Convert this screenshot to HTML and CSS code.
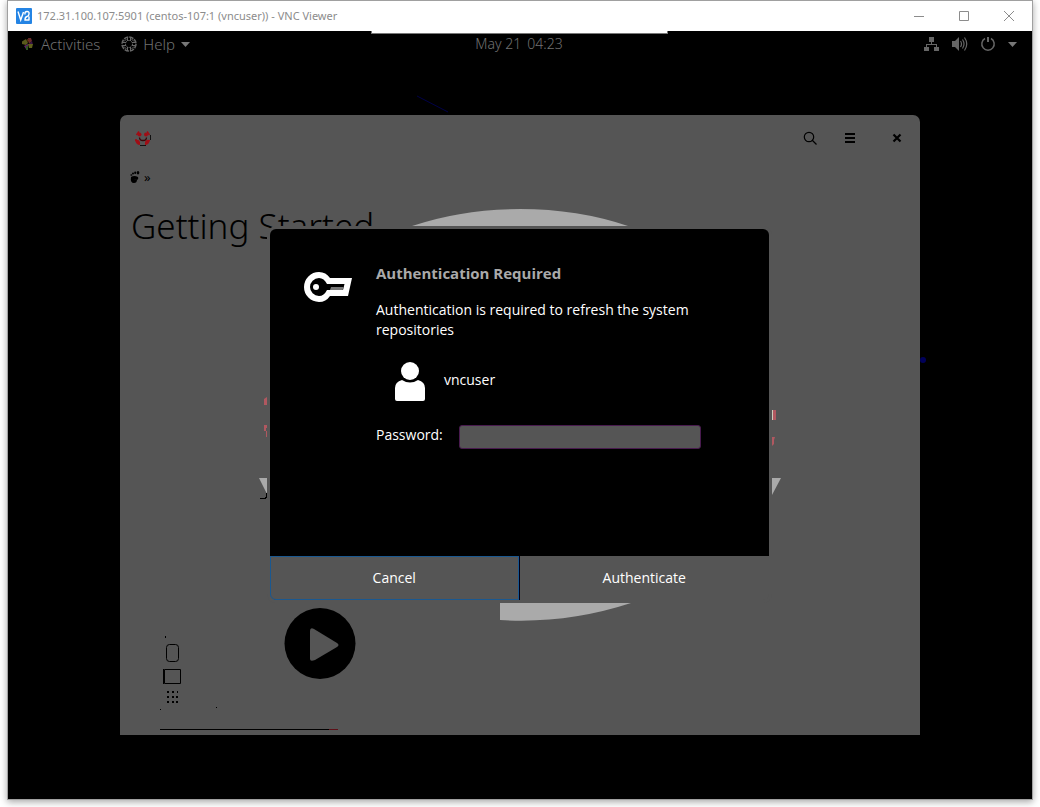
FILE: index.html
```html
<!DOCTYPE html>
<html lang="en">
<head>
<meta charset="utf-8">
<title>172.31.100.107:5901 (centos-107:1 (vncuser)) - VNC Viewer</title>
<link rel="stylesheet" href="styles.css">
</head>
<body>
<div class="viewer">
  <header class="titlebar">
    <svg class="app-logo" width="16" height="16" viewBox="0 0 16 16" aria-hidden="true">
      <rect width="16" height="16" rx="1" fill="#2484e4"/>
      <path d="M2 3.500 4.700 12 7.500 4M9 6.500q-.5-3 2-3t2 2.500q0 2-2 2.500-2 .5-2 3.500h4.500M13 8.500V12" fill="none" stroke="#fff" stroke-width="1.400"/>
    </svg>
    <h1 class="titlebar-text">172.31.100.107:5901 (centos-107:1 (vncuser)) - VNC Viewer</h1>
    <div class="window-controls">
      <button class="window-button" aria-label="Minimize"><svg width="12" height="12" viewBox="0 0 12 12"><path d="M1 6.500h10"/></svg></button>
      <button class="window-button" aria-label="Maximize"><svg width="12" height="12" viewBox="0 0 12 12"><path d="M1.500 1.500h9v9h-9z"/></svg></button>
      <button class="window-button" aria-label="Close"><svg width="12" height="12" viewBox="0 0 12 12"><path d="M1 1l10 10M11 1 1 11"/></svg></button>
    </div>
  </header>

  <main class="desktop">
    <nav class="panel">
      <div class="panel-left">
        <button class="panel-button activities">
          <svg width="14" height="14" viewBox="0 0 14 14" aria-hidden="true">
            <path d="M1 4.500 5 2l2 4-2 2-4-1z" fill="#59591c"/>
            <path d="M7 1h3l1 3-3 3z" fill="#692b2b"/>
            <path d="M6 2l2 1-1 3z" fill="#7a3d18"/>
            <path d="M8 7l3-3 1 4z" fill="#3b1748"/>
            <path d="M7 7h5l-1 4H8z" fill="#60601c"/>
            <path d="M3 9l4-2v6l-2-1z" fill="#5e2463"/>
            <path d="M5 9h2v4H5z" fill="#2f5424"/>
          </svg>
          <span>Activities</span>
        </button>
        <button class="panel-button help-menu">
          <svg width="16" height="16" viewBox="0 0 16 16" fill="none" stroke="#666" aria-hidden="true">
            <circle cx="8" cy="8" r="7" stroke-width="1.500" stroke-dasharray="4.500 1"/>
            <circle cx="8" cy="8" r="3.500" stroke-width="1" stroke-dasharray="2 1"/>
            <path d="M3 5.500 5.500 3M10.500 3 13 5.500M3 10.500 5.500 13M10.500 13l2.500-2.500M6.500 1v4M9.500 1v4M6.500 11v4M9.500 11v4M1 6.500h4M1 9.500h4M11 6.500h4M11 9.500h4" stroke-width="1"/>
          </svg>
          <span>Help</span>
          <svg width="9" height="5" viewBox="0 0 9 5" aria-hidden="true"><path d="M0 0h9L4.500 5z" fill="#777"/></svg>
        </button>
      </div>
      <button class="panel-button clock"><span>May 21</span><span>04:23</span></button>
      <button class="panel-button system" aria-label="System menu">
        <svg width="16" height="16" viewBox="0 0 16 16" fill="#666"><path d="M5 1h5v5H8v2h5v3h2v4h-5v-4h2V9H3v2h2v4H0v-4h2V8h5V6H5z"/></svg>
        <svg width="16" height="16" viewBox="0 0 16 16" fill="#666"><path d="M0 5h3l4-4v14l-4-4H0z"/><path d="M8.500 5q2 3 0 6M10.500 3.500q3 4.500 0 9M12.500 1.500q4.500 6.500 0 13" fill="none" stroke="#666" stroke-width="1.200"/></svg>
        <svg width="16" height="16" viewBox="0 0 16 16" fill="none" stroke="#666" stroke-width="1.500"><path d="M5 2.500a6.200 6.200 0 1 0 6 0"/><path d="M8 1v5" stroke-width="2"/></svg>
        <svg width="9" height="5" viewBox="0 0 9 5"><path d="M0 0h9L4.500 5z" fill="#777"/></svg>
      </button>
    </nav>

    <div class="viewer-toolbar"></div>
    <svg class="wallpaper" width="520" height="280" viewBox="0 0 520 280" aria-hidden="true">
      <path d="M1 1 32 17" stroke="#000048"/>
      <circle cx="507" cy="265" r="3" fill="#00005a"/>
    </svg>

    <section class="help-window" aria-label="Help">
      <svg class="help-art" width="800" height="620" viewBox="0 0 800 620" aria-hidden="true">
        <path d="M292 111q50-17 108-17t108 17z" fill="#aaa"/>
        <path d="M380 488h131q-64 21-131 17zM139 363h8v16zM652 363h9l-9 17z" fill="#aaa"/>
        <path d="M144 284l3-2v8h-3zM144 310h3v3h-1v9h1v-6h-3zM653 295h3v10h-3zM652 322h3l-1 3v4l-2 2z" fill="#b05860"/>
        <path d="M652 295h1v10h-1z" fill="#ccb"/>
        <path d="M140 383h5v-1h1v-4h1v5h-1v1h-6z"/>
        <circle cx="200" cy="528.500" r="35.500"/>
        <path d="M190 516q0-4 4-2l23 14q3 2 0 4l-22 13q-5 2-5-1z" fill="#555"/>
        <rect x="46.500" y="529.500" width="12" height="17" rx="3" fill="none" stroke="#000"/>
        <path d="M44.500 554.500h16v14h-16z" fill="none" stroke="#000"/>
        <path d="M43.500 554v15" stroke="#000"/>
        <path d="M47 576h2v2h-2zM52 576h2v2h-2zM57 576h1v2h-1zM47 581h2v2h-2zM52 581h2v2h-2zM56 581h2v2h-2zM47 586h2v2h-2zM52 586h2v2h-2zM56 586h2v2h-2zM45 521h1v2h-1zM40 594h1v1h-1zM96 592h1v1h-1zM40 614h169v1H40z"/>
        <path d="M209 614h9v1h-9z" fill="#5c1018"/>
      </svg>
      <header class="help-header">
        <svg width="16" height="16" viewBox="0 0 16 16" aria-hidden="true">
          <path d="M1.500 5 4 1.500M12 1.500 14.500 5M1 9v2" fill="none" stroke="#a00d15" stroke-width="1.500"/>
          <path d="M15.500 5v5M5 15.500h6" stroke="#101010"/>
          <circle cx="4.500" cy="4.500" r="2" fill="#a00d15"/><circle cx="11" cy="4.500" r="2" fill="#a00d15"/>
          <path d="M0 10q4-1 5 2v3q-4 0-5-5zM15 10q-4-1-5 2v3q4 0 5-5z" fill="#a00d15"/>
          <path d="M4.500 7.500q0 3 3.500 3t3.500-3" fill="none" stroke="#3c0508" stroke-width="1.300"/>
        </svg>
        <div class="help-actions">
          <button class="icon-button" aria-label="Search"><svg width="14" height="14" viewBox="0 0 14 14" fill="none" stroke="#000"><circle cx="6" cy="6" r="4.700" stroke-width="1.200"/><path d="M9 9l4.500 4.500" stroke-width="1.300"/></svg></button>
          <button class="icon-button menu" aria-label="Menu"><svg width="10" height="10" viewBox="0 0 10 10"><path d="M0 0h10v2H0zM0 4h10v2H0zM0 8h10v2H0z"/></svg></button>
          <button class="icon-button" aria-label="Close help"><svg width="10" height="10" viewBox="0 0 10 10"><path d="M1.500 1.500l7 7M8.500 1.500l-7 7" stroke="#000" stroke-width="2.200"/></svg></button>
        </div>
      </header>
      <nav class="breadcrumb">
        <svg width="10" height="12" viewBox="0 0 10 12" aria-hidden="true"><path d="M1 6q3-2 7 0 1 3-2 3-2-1-1 0l2-.5q0 3.500-3 3.500-4 0-3-6z"/><ellipse cx="1.300" cy="4" rx="1" ry=".8"/><ellipse cx="3" cy="2.500" rx="1" ry="1"/><ellipse cx="5.200" cy="1.700" rx="1" ry="1.200"/><ellipse cx="8" cy="1.800" rx="1.300" ry="1.800"/></svg>
        <span>»</span>
      </nav>
      <h2 class="help-title">Getting Started</h2>
    </section>

    <form class="auth-dialog" role="dialog" aria-labelledby="auth-title">
      <div class="auth-body">
        <svg class="key" width="48" height="30" viewBox="0 0 48 30" aria-hidden="true">
          <path d="M15 0q7 0 11 6h22l-4 18H26q-4 6-11 6a15 15 0 0 1 0-30z" fill="#fff"/>
          <path d="M15 6q5 0 8 6h17.500l-1.500 6H23q-3 6-8 6a9 9 0 0 1 0-18z"/>
          <path d="M27 15h12.500l-.8 3H26z" fill="#777"/>
          <circle cx="12" cy="15" r="3" fill="#fff"/>
        </svg>
        <div class="auth-content">
          <h2 class="auth-title" id="auth-title">Authentication Required</h2>
          <p class="auth-text">Authentication is required to refresh the system repositories</p>
          <div class="auth-user">
            <svg width="30" height="39" viewBox="0 0 30 39" fill="#fff" aria-hidden="true"><circle cx="15" cy="9" r="9"/><path d="M0 26q0-6 7-8 8 5 16 0 7 2 7 8v11q0 2-2 2H2q-2 0-2-2z"/></svg>
            <span class="auth-name">vncuser</span>
          </div>
          <div class="auth-field">
            <label for="password">Password:</label>
            <input id="password" type="password">
          </div>
        </div>
      </div>
      <div class="auth-actions">
        <button class="auth-button cancel" type="button">Cancel</button>
        <button class="auth-button" type="button">Authenticate</button>
      </div>
    </form>
  </main>
</div>
</body>
</html>
```

FILE: styles.css
```css
* { box-sizing: border-box; }

body {
  min-height: 100vh;
  display: flex;
  margin: 0;
  padding: 0 7px 7px;
  background: #fff;
  font-family: "Noto Sans", "Open Sans", sans-serif;
}

button {
  padding: 0;
  border: 0;
  background: none;
  font: inherit;
  color: inherit;
}

svg { display: block; flex: none; }
h1, h2, p { margin: 0; }

.viewer {
  flex: 1;
  display: flex;
  flex-direction: column;
  border: 1px solid #a0a0a0;
  background: #fff;
  box-shadow: 0 2px 7px rgba(0, 0, 0, .35);
}

.titlebar {
  height: 30px;
  display: flex;
  align-items: center;
  gap: 5px;
  padding: 0 1px 0 8px;
}

.titlebar-text {
  flex: 1;
  font-size: 11px;
  font-weight: 400;
  line-height: 16px;
  color: #8c8c8c;
}

.window-controls { display: flex; }

.window-button {
  width: 45px;
  height: 30px;
  display: grid;
  place-items: center;
}

.window-button svg { fill: none; stroke: #8c8c8c; }

.desktop {
  position: relative;
  flex: 1;
  background: #000;
}

.panel {
  height: 26px;
  display: grid;
  grid-template-columns: 1fr auto 1fr;
  align-items: center;
  padding: 0 15px 0 13px;
  font-size: 15px;
  font-weight: 300;
  line-height: 20px;
  color: #717171;
}

.panel-left, .panel-button { display: flex; align-items: center; }
.panel-left { gap: 21px; }
.activities, .help-menu { gap: 6px; }
.clock { gap: 6px; font-size: 14px; }
.system { justify-self: end; gap: 12px; }

.viewer-toolbar {
  position: absolute;
  top: 0;
  left: 50%;
  width: 297px;
  height: 3px;
  margin-left: -149px;
  border: solid #777;
  border-width: 0 1px 1px;
  background: #fff;
}

.wallpaper { position: absolute; top: 64px; left: 50%; margin-left: -104px; }

.help-window {
  position: absolute;
  top: 84px;
  bottom: 64px;
  left: 50%;
  width: 800px;
  margin-left: -400px;
  border-radius: 7px 7px 0 0;
  background: #555;
  color: #000;
}

.help-art { position: absolute; top: 0; left: 0; }

.help-header {
  height: 46px;
  display: flex;
  align-items: center;
  justify-content: space-between;
  padding: 0 11px 0 15px;
}

.help-actions { display: flex; gap: 16px; }

.icon-button {
  width: 24px;
  height: 24px;
  display: grid;
  place-items: center;
}

.icon-button.menu { margin-right: 7px; }

.breadcrumb {
  display: flex;
  align-items: center;
  gap: 4px;
  padding: 6px 10px;
  font-size: 13px;
  line-height: 20px;
}

.help-title {
  padding: 9px 11px;
  font-size: 35px;
  font-weight: 300;
  line-height: 48px;
}

.auth-dialog {
  position: absolute;
  top: 198px;
  left: 50%;
  width: 499px;
  margin-left: -250px;
  border-radius: 6px;
  background: #555;
  box-shadow: 0 0 0 3px #555;
  color: #fff;
  font-family: "Open Sans", sans-serif;
  font-size: 14px;
  line-height: 20px;
}

.auth-body {
  display: flex;
  gap: 24px;
  padding: 34px 68px 107px 34px;
  border-radius: 6px 6px 0 0;
  background: #000;
}

.key { margin-top: 9px; }
.auth-content { flex: 1; }

.auth-title {
  font-size: 15px;
  font-weight: 700;
  line-height: 20px;
  color: #aaa;
}

.auth-text { margin-top: 17px; }

.auth-user {
  display: flex;
  align-items: center;
  gap: 19px;
  margin-top: 22px;
  padding-left: 19px;
}

.auth-name { padding-bottom: 4px; }

.auth-field {
  display: grid;
  grid-template-columns: 83px 1fr;
  margin-top: 24px;
}

.auth-field input {
  width: 100%;
  height: 24px;
  border: 1px solid #481a4e;
  border-radius: 3px;
  background: #555;
  color: #fff;
  outline: 0;
}

.auth-actions {
  display: grid;
  grid-template-columns: 1fr 1fr;
}

.auth-button { height: 44px; }

.auth-button.cancel {
  margin-right: 1px;
  border: 1px solid #1a5890;
  border-radius: 0 0 0 6px;
  box-shadow: 1px 0 #000018;
}
```
